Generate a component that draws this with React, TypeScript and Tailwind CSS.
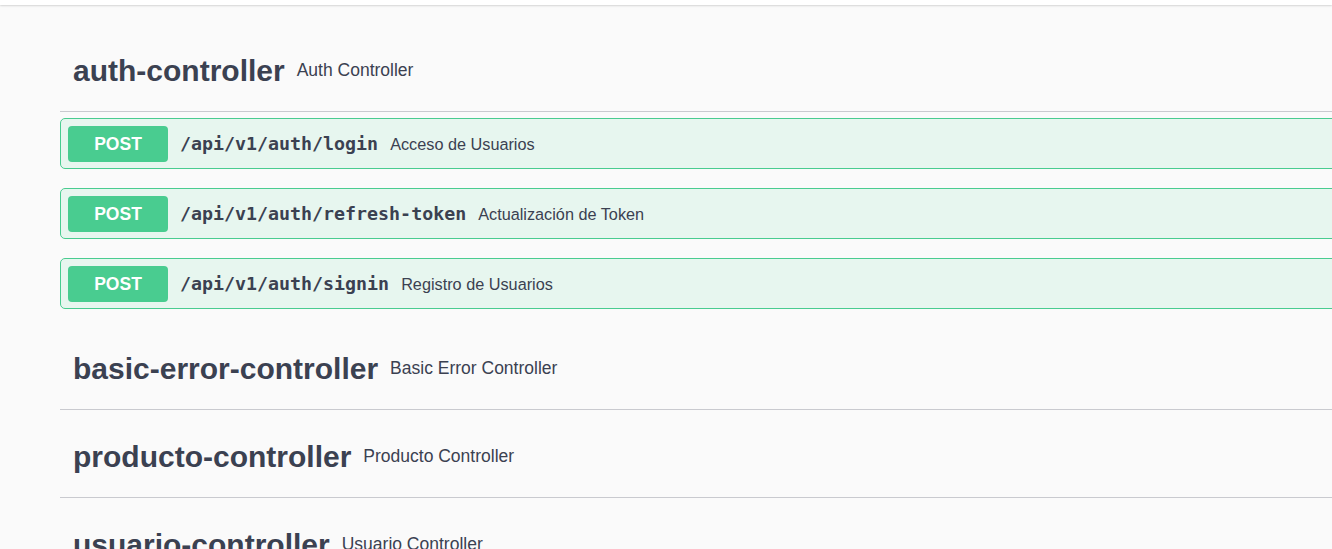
import React from "react";

const sans = { fontFamily: '"Liberation Sans", Arial, sans-serif' };
const mono = { fontFamily: '"DejaVu Sans Mono", "Liberation Mono", monospace' };

type Op = { path: string; desc: string };

function TagHeader({ name, desc }: { name: string; desc: string }) {
  return (
    <div className="flex h-[82px] items-center border-b border-[#c9cacf] pl-[13px]" style={sans}>
      <span className="text-[30px] font-bold leading-none text-[#3b4151]">{name}</span>
      <span className="ml-[12px] text-[17.5px] leading-none text-[#3b4151]">{desc}</span>
    </div>
  );
}

function OpBlock({ op }: { op: Op }) {
  return (
    <div className="flex h-[51px] items-center rounded-[5px] border border-[#49cc90] bg-[#e7f6ef] pl-[7px]">
      <div
        className="flex h-[36px] w-[100px] items-center justify-center rounded-[4px] bg-[#49cc90] pt-px text-[17.5px] font-bold text-white"
        style={sans}
      >
        POST
      </div>
      <span className="ml-[12px] pt-px text-[18.3px] font-bold text-[#3b4151]" style={mono}>
        {op.path}
      </span>
      <span className="ml-[12px] pt-px text-[16.25px] text-[#3b4151]" style={sans}>
        {op.desc}
      </span>
    </div>
  );
}

export default function App() {
  const ops: Op[] = [
    { path: "/api/v1/auth/login", desc: "Acceso de Usuarios" },
    { path: "/api/v1/auth/refresh-token", desc: "Actualización de Token" },
    { path: "/api/v1/auth/signin", desc: "Registro de Usuarios" },
  ];
  return (
    <div className="h-[549px] w-[1332px] overflow-hidden bg-[#fafafa]">
      <div className="h-[5px] bg-white shadow-[0_1px_2px_0_rgba(0,0,0,0.15)]" />
      <div className="ml-[60px] w-[1320px] pt-[25px]">
        <TagHeader name="auth-controller" desc="Auth Controller" />
        <div className="mt-[6px] flex flex-col gap-[19px]">
          {ops.map((op) => (
            <OpBlock key={op.path} op={op} />
          ))}
        </div>
        <div className="mt-[19px]">
          <TagHeader name="basic-error-controller" desc="Basic Error Controller" />
        </div>
        <div className="mt-[6px]">
          <TagHeader name="producto-controller" desc="Producto Controller" />
        </div>
        <div className="mt-[6px]">
          <TagHeader name="usuario-controller" desc="Usuario Controller" />
        </div>
      </div>
    </div>
  );
}
